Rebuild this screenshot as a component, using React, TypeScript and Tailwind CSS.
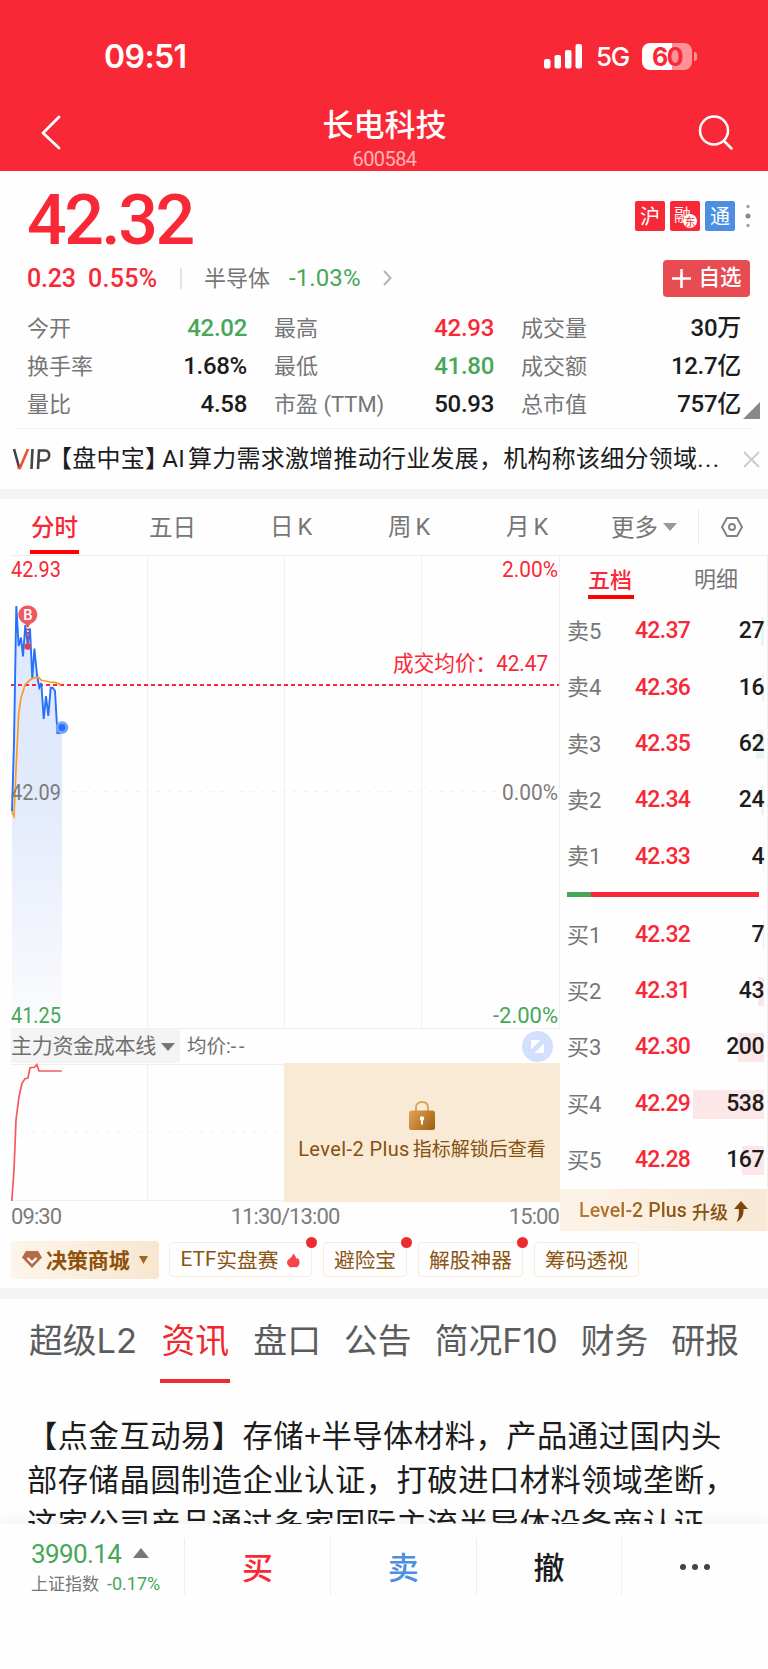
import type { ReactNode } from 'react'

const RED = '#f92836'
const GREEN = '#46a758'

type Tone = 'up' | 'down' | 'flat'

const toneClass: Record<Tone, string> = {
  up: 'text-[#f92836]',
  down: 'text-[#46a758]',
  flat: 'text-[#1c1c1c]',
}

const stats: { label: string; value: string; tone: Tone }[] = [
  { label: '今开', value: '42.02', tone: 'down' },
  { label: '最高', value: '42.93', tone: 'up' },
  { label: '成交量', value: '30万', tone: 'flat' },
  { label: '换手率', value: '1.68%', tone: 'flat' },
  { label: '最低', value: '41.80', tone: 'down' },
  { label: '成交额', value: '12.7亿', tone: 'flat' },
  { label: '量比', value: '4.58', tone: 'flat' },
  { label: '市盈 (TTM)', value: '50.93', tone: 'flat' },
  { label: '总市值', value: '757亿', tone: 'flat' },
]

const asks = [
  { label: '卖5', price: '42.37', volume: 27, bar: 3 },
  { label: '卖4', price: '42.36', volume: 16, bar: 2 },
  { label: '卖3', price: '42.35', volume: 62, bar: 8 },
  { label: '卖2', price: '42.34', volume: 24, bar: 3 },
  { label: '卖1', price: '42.33', volume: 4, bar: 1 },
]

const bids = [
  { label: '买1', price: '42.32', volume: 7, bar: 1 },
  { label: '买2', price: '42.31', volume: 43, bar: 6 },
  { label: '买3', price: '42.30', volume: 200, bar: 26 },
  { label: '买4', price: '42.29', volume: 538, bar: 71 },
  { label: '买5', price: '42.28', volume: 167, bar: 22 },
]

const pricePoints =
  '12,811.5 14,743 16.3,606 18.7,646 21,637.5 23,656.5 25.3,625 27.7,645 30,628.5 32.3,679 34.4,648.5 37,675 39.3,687.5 41.3,683 43.7,719 46,696 48.3,716 50.7,687.7 52.7,687.7 55,691 57.4,733 60,733 62,727.5'

const avgPoints =
  '12,812.3 14,816.3 16,770 18.7,713.3 21,698 25.3,684.3 30,680 34.3,677.7 39,677.7 41.3,680.3 50,682 55,682.4 61,684.6'

function StatusBar() {
  return (
    <div className="flex h-[94px] items-end justify-between pr-[71px] pb-[24px] pl-[104px] text-white">
      <span className="font-['Inter'] text-[32px] leading-[26px] font-semibold tracking-[-0.6px]">09:51</span>
      <div className="flex items-center">
        <svg width="39" height="25" viewBox="0 0 39 25" fill="#fff">
          <rect x="0" y="15" width="6.5" height="9.5" rx="2" />
          <rect x="10.5" y="11" width="6.5" height="13.5" rx="2" />
          <rect x="21" y="6" width="6.5" height="18.5" rx="2" />
          <rect x="31.5" y="0" width="6.5" height="24.5" rx="2" />
        </svg>
        <span className="ml-[13px] w-[34px] font-['Inter'] text-[26px] leading-[26px] font-medium tracking-[-1.2px]">5G</span>
        <div className="ml-[12px] flex h-[27px] w-[50px] items-center justify-center rounded-[8px] bg-[linear-gradient(90deg,#fff_60%,#fd9298_60%)] font-['Inter'] text-[25px] leading-[26px] font-bold tracking-[-1.6px] text-[#f92836]">
          60
        </div>
        <div className="ml-[2px] h-[9px] w-[3px] rounded-r-full bg-[#fd9298]" />
      </div>
    </div>
  )
}

function TitleBar() {
  return (
    <div className="flex h-[77px] items-center justify-between pr-[34px] pl-[40px]">
      <svg width="22" height="36" viewBox="0 0 22 36" fill="none" stroke="#fff" strokeWidth="2.8" strokeLinecap="round" strokeLinejoin="round">
        <path d="M19 2 3 18l16 15" />
      </svg>
      <div className="flex flex-col items-center pt-[5px] pl-[9px]">
        <h1 className="text-[31px] leading-[40px] font-medium text-white">长电科技</h1>
        <span className="mt-[7px] font-['Roboto'] text-[20px] leading-[18px] tracking-[-0.6px] text-[#ffb3b8]">600584</span>
      </div>
      <svg width="36" height="36" viewBox="0 0 36 36" fill="none" stroke="#fff" strokeWidth="2.5" strokeLinecap="round">
        <circle cx="16" cy="15.500" r="14" />
        <path d="m26 26 7.500 7.500" />
      </svg>
    </div>
  )
}

function QuoteHeader() {
  return (
    <section className="px-[27px] pt-[10px]">
      <div className="flex h-[78px] items-center justify-between">
        <span className="font-['Roboto'] text-[70px] leading-[78px] font-medium tracking-[-2.6px] text-[#f92836]">42.32</span>
        <div className="-mr-[10px] flex items-center gap-[5px] pb-[9px] text-[20px] leading-[30px] text-white">
          <span className="w-[30px] rounded-[2px] bg-[#f92836] text-center">沪</span>
          <span className="relative h-[30px] w-[30px] rounded-[2px] bg-[#f92836] pl-[4px]">
            <span className="block w-[19px] text-[17px] leading-[26px]">融</span>
            <span className="absolute right-[3px] bottom-[3px] flex h-[14px] w-[14px] items-center justify-center rounded-full bg-white text-[11px] leading-[14px] text-[#f92836]">
              东
            </span>
          </span>
          <span className="w-[30px] rounded-[2px] bg-[#4c8fe2] text-center">通</span>
          <svg className="ml-[5px]" width="6" height="24" viewBox="0 0 6 24" fill="#a0a0a0">
            <circle cx="3" cy="2.500" r="1.700" />
            <circle cx="3" cy="12" r="2.500" fill="#888" />
            <circle cx="3" cy="21.500" r="1.700" />
          </svg>
        </div>
      </div>

      <div className="flex h-[38px] items-center font-['Roboto','Noto_Sans_CJK_SC',sans-serif]">
        <div className="flex items-center gap-[13px] pt-[2px] text-[25px] font-medium text-[#f92836]">
          <span className="w-[48px] tracking-[-0.2px]">0.23</span>
          <span className="w-[71px] tracking-[0.3px]">0.55%</span>
        </div>
        <div className="ml-[21px] h-[21px] w-[2px] bg-[#e4e4e4]" />
        <span className="ml-[22px] text-[22px] text-[#767676]">半导体</span>
        <span className="ml-[19px] w-[72px] text-[24px] tracking-[0.1px] text-[#46a758]">-1.03%</span>
        <svg className="ml-[22px]" width="9" height="16" viewBox="0 0 9 16" fill="none" stroke="#b4b4b4" strokeWidth="2">
          <path d="m1 1 6.500 7L1 15" />
        </svg>
        <button className="-mr-[9px] ml-auto flex h-[37px] w-[87px] items-center justify-center gap-[7px] rounded-[4px] bg-[#e64c51] pl-[1px] text-[21.500px] font-medium text-white">
          <svg width="19" height="19" viewBox="0 0 19 19" stroke="#fff" strokeWidth="2.600">
            <path d="M9.500 0v19M0 9.500h19" />
          </svg>
          自选
        </button>
      </div>

      <div className="relative mt-[12px] grid grid-cols-[220px_220px_220px] gap-x-[27px]">
        {stats.map((s) => (
          <div key={s.label} className="flex h-[38px] items-center justify-between font-['Roboto','Noto_Sans_CJK_SC',sans-serif]">
            <span className="text-[22px] text-[#767676]">{s.label}</span>
            <span className={`text-[24px] font-medium tracking-[-0.3px] ${toneClass[s.tone]}`}>{s.value}</span>
          </div>
        ))}
        <svg className="absolute -right-[19px] bottom-[4px]" width="17" height="17" viewBox="0 0 17 17">
          <path d="M17 0v17H0z" fill="#888" />
        </svg>
      </div>
    </section>
  )
}

function VipNotice() {
  return (
    <div className="mx-[9px] mt-[5px]">
      <div className="mx-[9px] h-px bg-[#f2f2f2]" />
      <div className="flex h-[60px] items-center">
        <svg width="42" height="22" viewBox="0 0 42 22" fill="none" strokeWidth="2.600">
          <path d="m5 1 5 18" stroke="#444" />
          <path d="M8.500 20h2.500L19 1" stroke="#f0512d" />
          <path d="m23.500 1-1 20" stroke="#444" />
          <path d="m29 21 1-18.500h6c6 0 5.500 10-1 10h-5" stroke="#444" />
        </svg>
        <p className="ml-[-3px] w-[680px] pb-[2px] text-[24px] whitespace-nowrap tracking-[0.25px] text-[#1c1c1c]">
          【盘中宝】<span className="mr-[3px] ml-[-7px] font-['Roboto']">AI</span>算力需求激增推动行业发展，机构称该细分领域<span className="font-['Roboto'] tracking-[1.5px]">...</span>
        </p>
        <svg className="-mr-[1px] ml-auto shrink-0" width="17" height="17" viewBox="0 0 17 17" stroke="#ccc" strokeWidth="2">
          <path d="m1 1 15 15M16 1 1 16" />
        </svg>
      </div>
    </div>
  )
}

function PeriodTabs() {
  return (
    <nav className="flex h-[56px] items-center pl-[30px] text-[23.500px] text-[#767676]">
      <div className="flex h-full w-[119px] flex-col text-[#f92836]">
        <span className="flex h-[51px] items-center pt-[4px] pl-[1px] font-medium">分时</span>
        <span className="h-[4px] w-[49px] bg-[#ff0000]" />
      </div>
      <span className="w-[121px]">五日</span>
      <span className="w-[118px]">日<i className="ml-[4px] font-['Roboto'] not-italic">K</i></span>
      <span className="w-[118px]">周<i className="ml-[4px] font-['Roboto'] not-italic">K</i></span>
      <span className="w-[105px]">月<i className="ml-[4px] font-['Roboto'] not-italic">K</i></span>
      <span>更多</span>
      <svg className="ml-[5px]" width="14" height="8" viewBox="0 0 14 8">
        <path d="M0 0h14L7 8z" fill="#999" />
      </svg>
      <span className="ml-[21px] h-[35px] w-px bg-[#e8e8e8]" />
      <svg className="ml-[22px]" width="22" height="20" viewBox="0 0 22 20" fill="none" stroke="#808080" strokeWidth="1.900" strokeLinejoin="round">
        <path d="M6 1h10l5 9-5 9H6l-5-9z" />
        <circle cx="11" cy="10" r="3" />
      </svg>
    </nav>
  )
}

function AxisText({ x, y, w, fill, size = 22, children }: { x: number; y: number; w: number; fill: string; size?: number; children: ReactNode }) {
  return (
    <text x={x} y={y} textLength={w} lengthAdjust="spacingAndGlyphs" fill={fill} fontSize={size} fontFamily="Roboto, 'Noto Sans CJK SC', sans-serif">
      {children}
    </text>
  )
}

function PriceChart() {
  return (
    <svg className="block" width="560" height="474" viewBox="0 555 560 474" fill="none">
      <defs>
        <linearGradient id="area" x1="0" y1="606" x2="0" y2="1027" gradientUnits="userSpaceOnUse">
          <stop offset="0" stopColor="#deeafd" />
          <stop offset="0.45" stopColor="#e2eafb" />
          <stop offset="1" stopColor="#fcfcfd" />
        </linearGradient>
      </defs>
      <path d="M11 555.500h549M147.500 555v473M284.500 555v473M421.500 555v473M559.500 555v474M11 1028.500h549" stroke="#f0f0f0" />
      <path d="M62 791.500h497" stroke="#f2f2f2" strokeDasharray="4 6.500" />
      <polygon points={`12,1027 ${pricePoints} 62,1027`} fill="url(#area)" />
      <path d="M11 685h548" stroke={RED} strokeWidth="2" strokeDasharray="4 3" />
      <polyline points={pricePoints} stroke="#2670fb" strokeWidth="1.900" />
      <polyline points={avgPoints} stroke="#fd9a27" strokeWidth="1.700" />
      <circle cx="62" cy="727.500" r="6.300" fill="#76a4fb" />
      <circle cx="62" cy="727.500" r="3.400" fill="#2670fb" />
      <path d="M27.800 625v18" stroke="#dc3f52" strokeWidth="2.400" strokeDasharray="2 1.500" />
      <circle cx="27.800" cy="646.500" r="3.300" fill="#dc3f52" />
      <path d="M27.800 605.500a9.300 9.300 0 0 0-3.500 18l3.500 3 3.500-3a9.300 9.300 0 0 0-3.500-18z" fill="#f0595f" />
      <text x="27.800" y="619.700" textAnchor="middle" fontSize="14" fontWeight="600" fontFamily="Inter" fill="#fff">B</text>
      <AxisText x={11} y={577} w={50} fill={RED}>42.93</AxisText>
      <AxisText x={502} y={577} w={56} fill={RED}>2.00%</AxisText>
      <AxisText x={393} y={671} w={155} fill={RED} size={21.500}>成交均价：42.47</AxisText>
      <AxisText x={11} y={800} w={50} fill="#7c7c7c">42.09</AxisText>
      <AxisText x={502} y={800} w={56} fill="#7c7c7c">0.00%</AxisText>
      <AxisText x={11} y={1023} w={50} fill={GREEN}>41.25</AxisText>
      <AxisText x={493} y={1023} w={65} fill={GREEN}>-2.00%</AxisText>
    </svg>
  )
}

function FundPanel() {
  return (
    <>
      <div className="flex h-[34px] items-center pl-[11px] font-['Roboto','Noto_Sans_CJK_SC',sans-serif] text-[21px] text-[#6f6f6f]">
        <div className="flex h-full w-[169px] items-center bg-[#f4f4f4] pt-[1px] tracking-[-0.3px]">
          主力资金成本线
          <svg className="ml-[5px]" width="14" height="8" viewBox="0 0 14 8">
            <path d="M0 0h14L7 8z" fill="#777" />
          </svg>
        </div>
        <span className="ml-[7px] pt-[2px] text-[19.500px]">均价:<i className="tracking-[3px] not-italic">--</i></span>
        <svg className="mr-[7px] ml-auto" width="31" height="31" viewBox="0 0 31 31">
          <circle cx="15.500" cy="15.500" r="15.500" fill="#d3e0fd" />
          <path d="M9 18.500V9h9.500zM22 12.500V22h-9.500z" fill="#fff" />
        </svg>
      </div>
      <div className="flex h-[139px]">
        <svg className="block" width="284" height="139" viewBox="0 1063 284 139" fill="none">
          <path d="M11 1064.500h273M11 1200.500h273M147.500 1064v137" stroke="#f0f0f0" />
          <path d="M11 1132.500h273" stroke="#f2f2f2" strokeDasharray="4 6.500" />
          <polyline
            points="11.800,1201 14,1170 16,1120 19,1096.700 22,1083.300 25,1078.700 28,1078 30,1067.700 34.600,1067.300 36.800,1064.500 39,1071 61.800,1071"
            stroke="#f6585d"
            strokeWidth="1.700"
          />
        </svg>
        <div className="flex w-[276px] flex-col items-center bg-[#f9ead6] pt-[38px]">
          <svg width="26" height="29" viewBox="0 0 26 29" fill="none">
            <defs>
              <linearGradient id="lock" x1="0" y1="9" x2="26" y2="29" gradientUnits="userSpaceOnUse">
                <stop stopColor="#e5a556" />
                <stop offset="1" stopColor="#9d5c10" />
              </linearGradient>
            </defs>
            <path d="M7 11V6.500C7 3 9.500 1 13 1s6 2 6 5.500V11" stroke="#dda258" strokeWidth="1.800" />
            <rect y="9.500" width="26" height="19.500" rx="2.500" fill="url(#lock)" />
            <circle cx="13" cy="17.500" r="2.200" fill="#fff" />
            <path d="M13 18v5.500" stroke="#fff" strokeWidth="2" />
          </svg>
          <p className="mt-[3px] text-[19px] leading-[30px] whitespace-nowrap text-[#865010]">
            <span className="mr-[3px] font-['Roboto'] text-[20px] tracking-[0.4px]">Level-2 Plus</span>指标解锁后查看
          </p>
        </div>
      </div>
      <div className="flex h-[29px] items-center justify-between pr-[1px] pl-[11px] font-['Roboto'] text-[22px] tracking-[-0.9px] text-[#7c7c7c]">
        <span>09:30</span>
        <span>11:30/13:00</span>
        <span>15:00</span>
      </div>
    </>
  )
}

function BookRow({ row, side }: { row: (typeof asks)[number]; side: 'ask' | 'bid' }) {
  return (
    <div className="flex h-[56.300px] items-center font-['Roboto','Noto_Sans_CJK_SC',sans-serif]">
      <span className="w-[68px] text-[22px] text-[#767676]">{row.label}</span>
      <span className="text-[23px] font-medium tracking-[-0.7px] text-[#f92836]">{row.price}</span>
      <div className="relative ml-auto flex h-[29px] items-center">
        <div
          className={`absolute inset-y-0 right-0 ${side === 'ask' ? 'bg-[#eaf5ec]' : 'bg-[#fde6e8]'}`}
          style={{ width: row.bar }}
        />
        <span className="relative text-[23px] font-medium tracking-[-0.5px] text-[#1c1c1c]">{row.volume}</span>
      </div>
    </div>
  )
}

function OrderBook() {
  return (
    <aside className="flex h-[676px] w-[208px] flex-col border-t border-r border-[#f0f0f0]">
      <div className="flex h-[47.500px] shrink-0 pl-[28px] text-[22px]">
        <div className="w-[106px] pt-[5px] text-[#f92836]">
          <span className="block leading-[34px] font-medium">五档</span>
          <span className="block h-[4px] w-[46px] bg-[#ff0000]" />
        </div>
        <span className="pt-[4px] leading-[34px] text-[#767676]">明细</span>
      </div>
      <div className="pr-[3px] pl-[7px]">
        {asks.map((row) => (
          <BookRow key={row.label} row={row} side="ask" />
        ))}
        <div className="mt-[7px] mr-[5px] flex h-[5px]">
          <div className="w-[24px] bg-[#46a758]" />
          <div className="flex-1 bg-[#f92836]" />
        </div>
        <div className="mt-[10px]">
          {bids.map((row) => (
            <BookRow key={row.label} row={row} side="bid" />
          ))}
        </div>
      </div>
      <div className="mt-auto flex h-[42px] shrink-0 items-center justify-center bg-linear-to-r from-[#fcf3e8] to-[#f8e8d4] pt-[2px] text-[19px] font-medium text-[#865010]">
        <span className="mr-[5px] bg-linear-to-r from-[#bb7c32] to-[#865010] bg-clip-text font-['Roboto'] text-[19.500px] tracking-[0.1px] text-transparent">Level-2 Plus</span>
        <span className="text-[18px]">升级</span>
        <svg className="ml-[6px]" width="14" height="21" viewBox="0 0 14 21">
          <path d="M7 0 14 8h-4.500c.3 6-1.500 10.500-7 13C5 17 5 13 4.800 8H0z" fill="#7d470b" />
        </svg>
      </div>
    </aside>
  )
}

function ToolTag({ width, dot, children }: { width: number; dot?: boolean; children: ReactNode }) {
  return (
    <div
      className="relative flex h-[35px] items-center justify-center rounded-[4px] border border-[#fbead6] pt-[1px] text-[20.700px] whitespace-nowrap text-[#8a5413]"
      style={{ width }}
    >
      {children}
      {dot && <span className="absolute -top-[6px] -right-[6px] h-[11px] w-[11px] rounded-full bg-[#ee2b30]" />}
    </div>
  )
}

function ToolTags() {
  return (
    <div className="flex h-[57px] items-center pl-[11px]">
      <div className="flex h-[38px] w-[148px] items-center rounded-[4px] bg-linear-to-r from-[#fdf5eb] to-[#f8e6cf] pl-[11px] text-[21px] font-bold text-[#8f500a]">
        <svg width="20" height="17" viewBox="0 0 20 17" fill="none">
          <path d="M4 0h12l4 6.500L10 17 0 6.500z" fill="#b56a48" />
          <path d="m5.500 7 4.500 4.500L14.500 7" stroke="#fff" strokeWidth="2.200" />
        </svg>
        <span className="ml-[4px] tracking-[-0.1px]">决策商城</span>
        <svg className="ml-[9px]" width="9" height="8" viewBox="0 0 9 8">
          <path d="M0 0h9L4.500 8z" fill="#a56621" />
        </svg>
      </div>
      <div className="ml-[10px] flex gap-[11px]">
        <ToolTag width={143} dot>
          <span className="font-['Roboto']">ETF</span>实盘赛
          <svg className="ml-[9px]" width="13" height="15" viewBox="0 0 14 15">
            <path d="M6.500 0c2.500 2 3.300 4 3.500 6l1.500-1.500C13 6.500 14 9 13.300 11c-.6 2.200-2 3.500-3.500 4-1-.8-4.500-.8-5.800 0C1.500 14 0 12 0 9.500 0 6 6 5 6.500 0z" fill="#f2464c" />
          </svg>
        </ToolTag>
        <ToolTag width={84} dot>避险宝</ToolTag>
        <ToolTag width={105} dot>解股神器</ToolTag>
        <ToolTag width={105}>筹码透视</ToolTag>
      </div>
    </div>
  )
}

function NewsSection() {
  return (
    <section className="h-[225px] overflow-hidden">
      <nav className="flex h-[84px] justify-between px-[29px] pt-[15px] text-[33.800px] leading-[50px] whitespace-nowrap text-[#5c5c5c]">
        <span>超级<i className="font-['Inter'] text-[34.500px] tracking-[0px] not-italic">L2</i></span>
        <span className="flex flex-col items-center text-[#f0282e]">
          资讯
          <i className="mt-[15px] h-[4px] w-[70px] bg-[#ee2b30]" />
        </span>
        <span>盘口</span>
        <span>公告</span>
        <span>简况<i className="font-['Inter'] text-[34.500px] tracking-[-0.3px] not-italic">F10</i></span>
        <span>财务</span>
        <span>研报</span>
      </nav>
      <article className="mt-[29px] pl-[27px] text-[30.300px] leading-[44px] whitespace-nowrap tracking-[0.500px] text-[#1c1c1c]">
        <p>【点金互动易】存储+半导体材料，产品通过国内头</p>
        <p>部存储晶圆制造企业认证，打破进口材料领域垄断，</p>
        <p>这家公司产品通过多家国际主流半导体设备商认证</p>
      </article>
    </section>
  )
}

function BottomBar() {
  return (
    <footer className="flex h-[145px] bg-[#fefefe] pt-[14px] shadow-[0_-4px_14px_rgba(0,0,0,0.05)]">
      <div className="flex h-[57px] w-[184px] flex-col pl-[31px] font-['Roboto','Noto_Sans_CJK_SC',sans-serif]">
        <div className="flex items-center gap-[10px] pt-[1px] text-[26px] leading-[30px] tracking-[-0.6px] text-[#46a758]">
          <span className="w-[92px]">3990.14</span>
          <svg className="mb-[3px]" width="16" height="10" viewBox="0 0 16 10">
            <path d="M8 0l8 10H0z" fill="#777" />
          </svg>
        </div>
        <div className="mt-[3px] flex items-center gap-[8px] text-[17px] leading-[24px] text-[#767676]">
          上证指数
          <span className="text-[18px] text-[#46a758]">-0.17%</span>
        </div>
      </div>
      <div className="grid h-[57px] flex-1 grid-cols-4 divide-x divide-[#efefef] border-l border-[#efefef] text-[31px] font-medium">
        <button className="text-[#f92836]">买</button>
        <button className="text-[#4c8fe2]">卖</button>
        <button className="text-[#1c1c1c]">撤</button>
        <button className="flex items-center justify-center gap-[6px]">
          <span className="h-[6px] w-[6px] rounded-full bg-[#444]" />
          <span className="h-[6px] w-[6px] rounded-full bg-[#444]" />
          <span className="h-[6px] w-[6px] rounded-full bg-[#444]" />
        </button>
      </div>
    </footer>
  )
}

export default function App() {
  return (
    <main className="h-[1669px] w-[768px] overflow-hidden bg-[#fefefe] font-['Noto_Sans_CJK_SC',sans-serif]" lang="zh-CN">
      <header className="h-[171px] bg-[#f92836]">
        <StatusBar />
        <TitleBar />
      </header>
      <QuoteHeader />
      <VipNotice />
      <div className="h-[10px] bg-[#f4f4f4]" />
      <PeriodTabs />
      <div className="flex h-[676px]">
        <div className="w-[560px]">
          <PriceChart />
          <FundPanel />
        </div>
        <OrderBook />
      </div>
      <ToolTags />
      <div className="h-[11px] bg-[#f4f4f4]" />
      <NewsSection />
      <BottomBar />
    </main>
  )
}
